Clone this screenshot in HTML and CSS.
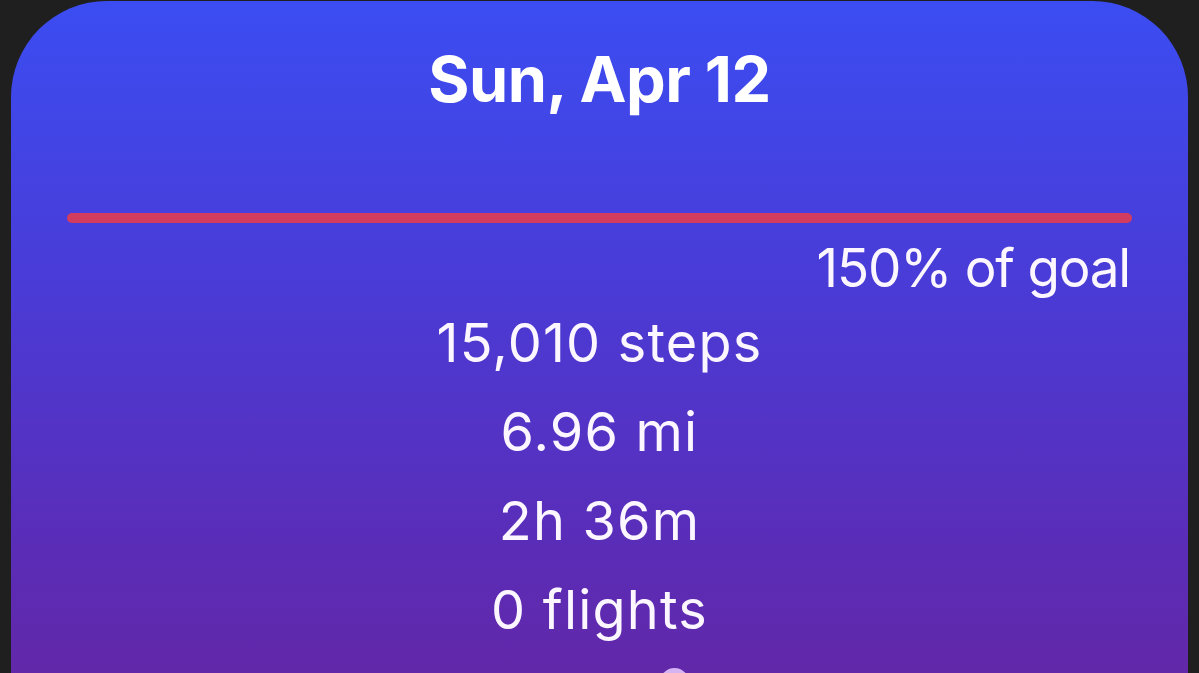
FILE: index.html
```html
<!DOCTYPE html>
<html lang="en">
<head>
    <meta charset="UTF-8">
    <meta name="viewport" content="width=device-width, initial-scale=1.0">
    <title>Steps</title>
    <link rel="stylesheet" href="styles.css">
</head>
<body>
    <div class="card">
        <h1 class="date">Sun, Apr 12</h1>

        <div class="bar"></div>
        <p class="goal">150% of goal</p>

        <ul class="stats">
            <li>15,010 steps</li>
            <li>6.96 mi</li>
            <li>2h 36m</li>
            <li>0 flights</li>
        </ul>

        <div class="dot-row">
            <span class="dot"></span>
        </div>
    </div>
</body>
</html>
```

FILE: styles.css
```css
/* Reset */
* {
    margin: 0;
    padding: 0;
    box-sizing: border-box;
}
html, body {
    height: 100%;
    overflow: hidden;
}
body {
    font-family: Inter, "Noto Sans", sans-serif;
    background-color: #1f1f1f;
    color: #ffffff;
    padding: 1px 11px 0;
}
.card {
    min-height: 720px;
    background: linear-gradient(180deg, #3b4df2 0%, #4a3bd6 40%, #5a2db8 75%, #6526a4 100%);
    border-radius: 96px 96px 0 0;
    padding-top: 38px;
}
.date {
    text-align: center;
    font-size: 63px;
    font-weight: 700;
    line-height: 80px;
    letter-spacing: -0.5px;
}
.bar {
    height: 10px;
    margin: 94px 56px 0;
    background-color: #d23c5e;
    border-radius: 5px;
}
.goal {
    text-align: right;
    padding-right: 58px;
    margin-top: 15px;
    font-size: 53px;
    line-height: 60px;
    letter-spacing: -1.2px;
    color: #fbf6ff;
}
.stats {
    list-style: none;
    text-align: center;
    font-size: 54px;
    line-height: 89px;
    letter-spacing: 1.2px;
    color: #fbf6ff;
}
/* page indicator, only the top shows */
.dot-row {
    display: flex;
    padding-left: 649px;
    margin-top: 14px;
}
.dot {
    width: 29px;
    height: 29px;
    border-radius: 50%;
    background-color: #d6b4f4;
}
```
